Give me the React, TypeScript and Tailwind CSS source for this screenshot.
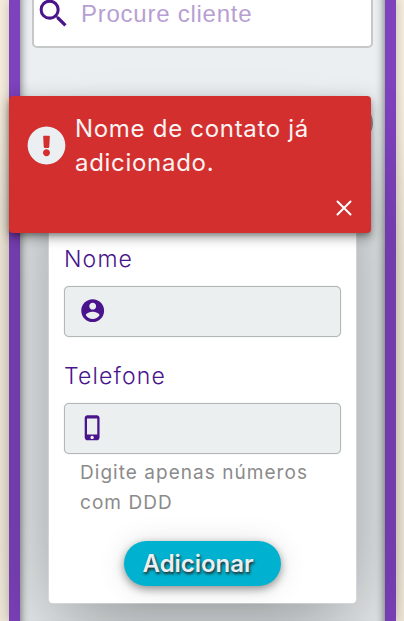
import React from 'react';

function SearchBar() {
  return (
    <div className="-mt-5 ml-[12px] flex h-[68px] w-[341px] shrink-0 rounded-[5px] border-2 border-[#c6c8c8] bg-white pl-[1px] pt-[13px]">
      <svg viewBox="0 0 24 24" className="h-[37px] w-[37px] fill-[#4a148c]">
        <path d="M15.5 14h-.79l-.28-.27A6.471 6.471 0 0 0 16 9.5 6.5 6.5 0 1 0 9.5 16c1.61 0 3.09-.59 4.23-1.57l.27.28v.79l5 4.99L20.49 19l-4.99-5zm-6 0C7.01 14 5 11.99 5 9.5S7.01 5 9.5 5 14 7.01 14 9.5 11.99 14 9.5 14z" />
      </svg>
      <span className="ml-[9px] mt-[4px] font-['Liberation_Sans',sans-serif] text-[24px] leading-[30px] tracking-[0.75px] text-[#b79fd3]">
        Procure cliente
      </span>
    </div>
  );
}

function Field({ label, icon }: { label: string; icon: React.ReactNode }) {
  return (
    <label className="block">
      <span className="block h-[40px] text-[23px] font-light leading-[26px] tracking-[1.15px] text-[#4a148c]">
        {label}
      </span>
      <span className="flex h-[51px] w-[277px] items-center rounded-[5px] border border-[#b2b7b8] bg-[#ebeff0] pl-[14px] shadow-[0_0_1px_#b2b7b8]">
        <svg viewBox="0 0 24 24" className="-mt-px h-[27.4px] w-[27.4px] fill-[#4a148c]">
          {icon}
        </svg>
      </span>
    </label>
  );
}

function ContactForm() {
  return (
    <form className="ml-[29px] mt-[101px] flex h-[454px] w-[307px] shrink-0 flex-col rounded-[4px] bg-white pl-[15px] pt-[97px] shadow-[0_0_0_0.5px_#e1e4e4,0_25px_95px_rgba(0,0,0,0.38)]">
      <Field
        label="Nome"
        icon={
          <path d="M12 2C6.48 2 2 6.48 2 12s4.48 10 10 10 10-4.48 10-10S17.52 2 12 2zm0 3c1.66 0 3 1.34 3 3s-1.34 3-3 3-3-1.34-3-3 1.34-3 3-3zm0 14.2c-2.5 0-4.71-1.28-6-3.22.03-1.99 4-3.08 6-3.08 1.99 0 5.97 1.09 6 3.08-1.29 1.94-3.5 3.22-6 3.22z" />
        }
      />
      <div className="mt-[26px]">
        <Field
          label="Telefone"
          icon={
            <path d="M15.5 1h-8C6.12 1 5 2.12 5 3.5v17C5 21.88 6.12 23 7.5 23h8c1.38 0 2.5-1.12 2.5-2.5v-17C18 2.12 16.88 1 15.5 1zm-4 21c-.83 0-1.5-.67-1.5-1.5s.67-1.5 1.5-1.5 1.5.67 1.5 1.5-.67 1.5-1.5 1.5zm4.5-4H7V4h9v14z" />
          }
        />
      </div>
      <p className="ml-[16px] mt-[4px] whitespace-nowrap text-[19px] leading-[30px] tracking-[1.04px] text-[#8b8b8b]">
        Digite apenas números
        <br />
        com DDD
      </p>
      <button
        type="button"
        className="ml-[60px] mt-[23px] h-[45px] w-[157px] rounded-full bg-[#00b2cf] pr-[9px] text-[24px] font-[560] leading-[44px] tracking-[-0.05px] text-[#ebeff1] shadow-[0_3px_8px_rgba(0,0,0,0.4),0_2px_30px_rgba(0,0,0,0.12)] [text-shadow:1px_2px_3px_#222]"
      >
        Adicionar
      </button>
    </form>
  );
}

function ErrorToast() {
  return (
    <div
      role="alert"
      className="absolute left-[9px] top-[96px] flex h-[136.5px] w-[362px] flex-col rounded-[4px] bg-[#d32f2f] pl-[18px] pt-[16px] shadow-[0_3px_5px_-1px_rgba(0,0,0,0.3),0_6px_10px_rgba(0,0,0,0.2),0_1px_18px_rgba(0,0,0,0.16)]"
    >
      <div className="flex items-center">
        <svg viewBox="0 0 512 512" className="-mt-[2px] h-[39px] w-[39px] fill-[#ebeff1]">
          <path d="M504 256c0 137-111 248-248 248S8 393 8 256 119 8 256 8s248 111 248 248zm-248 50c-25.405 0-46 20.595-46 46s20.595 46 46 46 46-20.595 46-46-20.595-46-46-46zm-43.673-165.346l7.418 136c.347 6.364 5.609 11.346 11.982 11.346h48.546c6.373 0 11.635-4.982 11.982-11.346l7.418-136c.375-6.874-5.098-12.654-11.982-12.654h-63.383c-6.884 0-12.356 5.78-11.981 12.654z" />
        </svg>
        <p className="ml-[9px] whitespace-nowrap text-[24px] leading-[34px] tracking-[0.7px] text-[#fbf3f3]">
          Nome de contato já
          <br />
          adicionado.
        </p>
      </div>
      <svg
        viewBox="0 0 24 24"
        className="ml-auto mr-[15px] mt-[16px] h-[24px] w-[24px] fill-none stroke-white stroke-2"
        strokeLinecap="round"
      >
        <path d="M5.5 5.5l13 13M18.5 5.5l-13 13" />
      </svg>
    </div>
  );
}

export default function App() {
  return (
    <div className="relative h-[621px] w-[404px] overflow-hidden bg-[#f4ebdc] pl-[9px] font-[Inter,'Open_Sans',sans-serif]">
      <main className="flex h-[621px] w-[387px] flex-col border-x-[11px] border-[#7d42bc] bg-[#ebeff1] shadow-[0_0_10px_rgba(0,0,0,0.2),inset_10px_0_10px_-10px_rgba(0,0,0,0.6),inset_-10px_0_10px_-10px_rgba(0,0,0,0.6)]">
        <SearchBar />
        <ContactForm />
      </main>
      <div className="absolute left-[335px] top-[104px] h-[38px] w-[38px] rounded-full bg-[#8b9091]" />
      <ErrorToast />
    </div>
  );
}
